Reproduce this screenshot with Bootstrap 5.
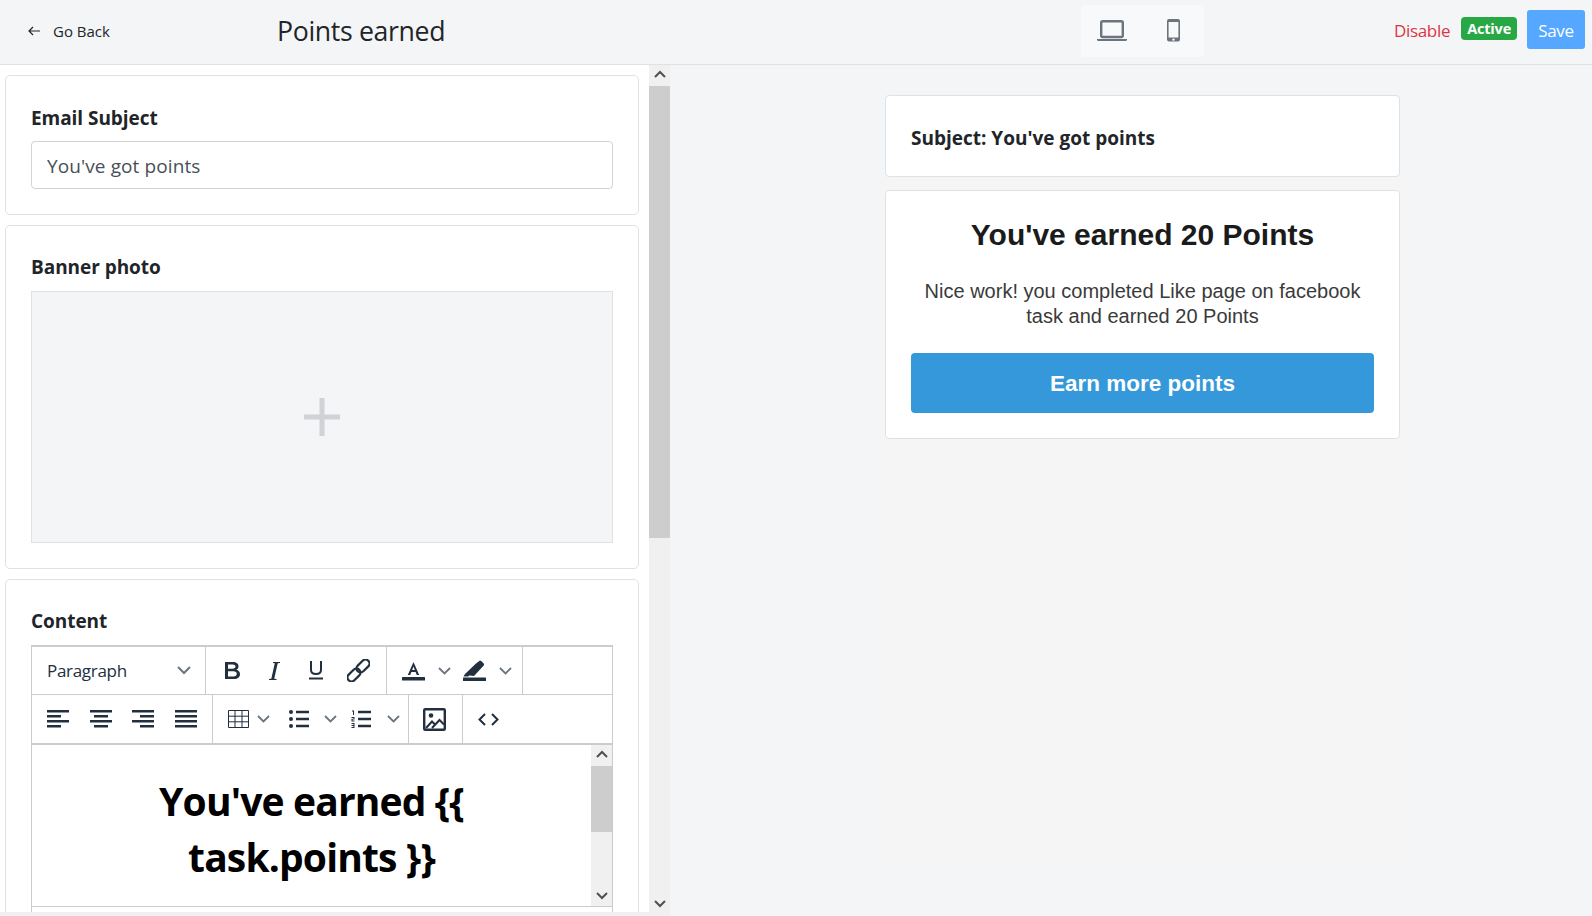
<!DOCTYPE html>
<html lang="en">
<head>
    <meta charset="UTF-8">
    <meta name="viewport" content="width=device-width, initial-scale=1.0">
    <title>Points earned</title>
    <link href="https://cdn.jsdelivr.net/npm/bootstrap@5.3.0/dist/css/bootstrap.min.css" rel="stylesheet">
    <style>
        html, body { height: 100%; overflow: hidden; }
        body { font-family: "Open Sans", "Noto Sans", sans-serif; color: #212529; background: #f4f5f7; }
        .top-bar { height: 65px; border-bottom: 1px solid #dee2e6; background: #f4f5f7; padding-bottom: 2px; }
        .back-link { width: 277px; padding-left: 27px; font-size: 15px; color: #212529; text-decoration: none; gap: 12px; }
        .page-title { font-size: 26.7px; font-weight: 400; margin: 0; letter-spacing: -0.35px; }
        .device-box { width: 123px; height: 52px; background: #f8f9fa; border-radius: 4px; margin: 0 0 1px 636px; gap: 40px; padding-right: 7px; }
        .disable-link { font-size: 17px; color: #dc3545; text-decoration: none; letter-spacing: -0.3px; }
        .status-pill { background: #28a745; color: #fff; font-size: 14.5px; font-weight: 700; padding: 0 6px; height: 23px; line-height: 23px; border-radius: 4px; margin: 0 10px 5px 11px; letter-spacing: -0.2px; }
        .save-btn { width: 58px; height: 39px; padding: 3px 0 0; background: #55a7ff; border: 0; color: #fff; font-size: 17px; border-radius: 3px; margin: 0 7px 4px 0; letter-spacing: -0.3px; }
        .main-area { height: 847px; }
        .left-pane { width: 670px; background: #fff; }
        .left-content { width: 649px; padding: 10px 10px 0 5px; overflow: hidden; }
        .edit-card { border: 1px solid #dee2e6; border-radius: 5px; padding: 27px 25px 25px; margin-bottom: 10px; background: #fff; }
        .edit-card.subject-card { height: 140px; padding-top: 28px; }
        .edit-card.banner-card { height: 344px; }
        .edit-card.content-card { height: 400px; margin-bottom: 0; }
        .field-title { font-size: 19px; font-weight: 700; margin-bottom: 10px; line-height: 28px; letter-spacing: -0.05px; }
        .subject-card .field-title { margin-bottom: 9px; }
        .subject-input { height: 48px; border-color: #ced4da; border-radius: 4px; color: #495057; font-size: 19px; padding: 2px 15px 0; letter-spacing: .1px; }
        .banner-drop { height: 252px; background: #f4f5f7; border: 1px solid #dee2e6; }
        .scroll-rail { width: 21px; flex: none; background: #f0f0f0; }
        .scroll-arrow { height: 21px; color: #505050; }
        .arrow-up { padding-bottom: 4px; }
        .arrow-down { padding-top: 4px; }
        .scroll-thumb { background: #cdcdcd; }
        .rail-thumb-main { height: 452px; }
        .editor-box { border: 1px solid #ccc; border-top-width: 2px; width: 582px; }
        .tool-row { height: 48px; border-bottom: 1px solid #ccc; }
        .tool-row.second-row { height: 50px; border-bottom-width: 2px; }
        .tool-group { height: 100%; border-right: 1px solid #ccc; color: #222f3e; }
        .para-group { width: 174px; padding: 0 14px 0 15px; font-size: 17px; letter-spacing: -0.3px; justify-content: space-between; }
        .format-group { width: 181px; padding-left: 5px; }
        .tool-cell { width: 42px; }
        .color-group { width: 136px; padding-left: 15px; }
        .align-group { width: 181px; padding-left: 15px; gap: 20.5px; }
        .lists-group { width: 196px; padding-left: 15px; }
        .image-group { width: 54px; justify-content: center; padding-right: 2px; }
        .code-group { border-right: 0; padding-left: 15px; }
        .editor-text { height: 161px; }
        .editor-body { min-width: 0; padding: 28px 40px 0; font-size: 39px; font-weight: 700; line-height: 56px; text-align: center; color: #000; letter-spacing: -0.85px; }
        .editor-foot { height: 20px; border-top: 1px solid #ccc; }
        .right-pane { padding-top: 30px; background: #f4f5f7; height: 851px; }
        .mail-shell { width: 540px; margin-left: 202px; }
        .mail-bg { background: #f5f5f5; height: 688px; padding: 13px 12px 0 13px; }
        .mail-subject { height: 82px; margin: 0 12px 0 13px; border: 1px solid #dee2e6; border-radius: 4px; background: #fff; padding: 29px 25px 0; font-size: 19px; font-weight: 700; line-height: 26px; }
        .mail-card { height: 249px; border: 1px solid #dee2e6; border-radius: 4px; background: #fff; padding: 0 25px; font-family: "Liberation Sans", Arial, sans-serif; text-align: center; }
        .mail-heading { font-size: 30px; font-weight: 700; color: #1b1b1b; line-height: 36px; margin: 26px 0 0; }
        .mail-text { font-size: 20px; line-height: 25px; color: #3a3a3a; margin: 26px 0 0; }
        .mail-action { height: 60px; line-height: 62px; margin-top: 24px; background: #3498db; color: #fff; font-size: 22.5px; font-weight: 700; border-radius: 4px; }
        .bottom-strip { height: 4px; background: #f0f0f0; width: 670px; position: relative; }
    </style>
</head>
<body>
    <div class="top-bar d-flex align-items-center">
        <a href="#" class="back-link d-flex align-items-center">
            <svg width="14" height="12" viewBox="0 0 14 12" fill="none" stroke="#212529" stroke-width="1.2"><path d="M13 6H2M6 2 2 6l4 4"/></svg>
            <span>Go Back</span>
        </a>
        <h1 class="page-title">Points earned</h1>
        <div class="device-box d-flex align-items-center justify-content-center">
            <svg width="30" height="22" viewBox="0 0 30 22"><rect x="4.200" y="1.200" width="21.600" height="15.800" rx="1.500" fill="none" stroke="#6c757d" stroke-width="2.400"/><path d="M0 19h30v1a1.500 1.500 0 0 1-1.500 1h-27A1.500 1.500 0 0 1 0 20z" fill="#6c757d"/></svg>
            <svg width="14" height="23" viewBox="0 0 14 23"><rect width="13" height="22.500" rx="2" fill="#6c757d"/><rect x="1.600" y="3" width="9.800" height="15.500" fill="#f8f9fa"/><circle cx="6.500" cy="20.600" r="1.200" fill="#f8f9fa"/></svg>
        </div>
        <div class="ms-auto d-flex align-items-center">
            <a href="#" class="disable-link">Disable</a>
            <span class="status-pill">Active</span>
            <button class="save-btn" type="button">Save</button>
        </div>
    </div>

    <div class="main-area d-flex">
        <div class="left-pane d-flex">
            <div class="left-content">
                <div class="edit-card subject-card">
                    <div class="field-title">Email Subject</div>
                    <input type="text" class="form-control subject-input" value="You've got points">
                </div>
                <div class="edit-card banner-card">
                    <div class="field-title">Banner photo</div>
                    <div class="banner-drop d-flex align-items-center justify-content-center">
                        <svg width="36" height="38" viewBox="0 0 36 38"><path d="M15.500 0h5v16.500H36v5H20.500V38h-5V21.500H0v-5h15.500z" fill="#d0d2d5"/></svg>
                    </div>
                </div>
                <div class="edit-card content-card">
                    <div class="field-title">Content</div>
                    <div class="editor-box">
                        <div class="tool-row d-flex">
                            <div class="tool-group para-group d-flex align-items-center">
                                <span>Paragraph</span>
                                <svg width="14" height="9" viewBox="0 0 14 9" fill="none" stroke="#6b7580" stroke-width="2"><path d="m1 1 6 6 6-6"/></svg>
                            </div>
                            <div class="tool-group format-group d-flex align-items-center">
                                <div class="tool-cell d-flex justify-content-center">
                                    <svg width="15" height="17" viewBox="0 0 15 17" fill="#222f3e" fill-rule="evenodd"><path d="M0 0h8c3.300 0 5.500 1.600 5.500 4.300 0 1.600-.8 2.900-2.200 3.500C13.400 8.400 15 9.900 15 12.200c0 3-2.400 4.800-5.800 4.800H0zm3 2.600v4.100h4.600c1.700 0 2.900-.8 2.900-2.100 0-1.300-1.100-2-2.900-2zm0 6.600v5.200h5.500c2 0 3.300-1 3.300-2.600s-1.300-2.600-3.300-2.600z"/></svg>
                                </div>
                                <div class="tool-cell d-flex justify-content-center">
                                    <svg width="11" height="18" viewBox="0 0 11 18" fill="#222f3e"><path d="M4 0h7v1l-2.300.3L5.200 16.700l2.300.3v1H0v-1l2.300-.3L5.800 1.300 4 1z"/></svg>
                                </div>
                                <div class="tool-cell d-flex justify-content-center">
                                    <svg width="14" height="19" viewBox="0 0 14 19" fill="none" stroke="#222f3e" stroke-width="2"><path d="M2 0v9c0 2.600 1.700 4 5 4s5-1.400 5-4V0"/><path d="M0 17.500h14"/></svg>
                                </div>
                                <div class="tool-cell d-flex justify-content-center">
                                    <svg width="23" height="23" viewBox="0 0 23 23" fill="none" stroke="#222f3e" stroke-width="2.200"><rect x="12" y="-.500" width="8" height="15" rx="4" transform="rotate(45 16 7)"/><rect x="3" y="8.500" width="8" height="15" rx="4" transform="rotate(45 7 16)"/></svg>
                                </div>
                            </div>
                            <div class="tool-group color-group d-flex align-items-center">
                                <svg width="23" height="20" viewBox="0 0 23 20"><path d="M11.500 1 5.800 14h2.400l1.200-3h4.200l1.200 3h2.400zM10.200 9l1.300-3.600L12.800 9z" fill="#222f3e"/><rect y="16" width="23" height="3.500" rx=".5" fill="#222f3e"/></svg>
                                <svg style="margin-left:13px" width="13" height="8" viewBox="0 0 13 8" fill="none" stroke="#6b7580" stroke-width="1.800"><path d="m1 1 5.500 5.500L12 1"/></svg>
                                <svg style="margin-left:12px" width="23" height="21" viewBox="0 0 23 21"><path d="M2 14 13 3.500l3-2.300c.8-.6 1.800-.6 2.500 0l2 2c.7.8.7 1.800 0 2.600L11 16l-4.500-.5L5 16.500H.5z" fill="#222f3e"/><rect y="17.500" width="23" height="3.500" rx=".5" fill="#222f3e"/></svg>
                                <svg style="margin-left:13px" width="13" height="8" viewBox="0 0 13 8" fill="none" stroke="#6b7580" stroke-width="1.800"><path d="m1 1 5.500 5.500L12 1"/></svg>
                            </div>
                        </div>
                        <div class="tool-row second-row d-flex">
                            <div class="tool-group align-group d-flex align-items-center">
                                <svg width="22" height="18" viewBox="0 0 22 18" fill="#222f3e"><path d="M0 0h22v2.500H0zM0 5h14v2.500H0zM0 10h22v2.500H0zM0 15h14v2.500H0z"/></svg>
                                <svg width="22" height="18" viewBox="0 0 22 18" fill="#222f3e"><path d="M0 0h22v2.500H0zM4 5h14v2.500H4zM0 10h22v2.500H0zM4 15h14v2.500H4z"/></svg>
                                <svg width="22" height="18" viewBox="0 0 22 18" fill="#222f3e"><path d="M0 0h22v2.500H0zM8 5h14v2.500H8zM0 10h22v2.500H0zM8 15h14v2.500H8z"/></svg>
                                <svg width="22" height="18" viewBox="0 0 22 18" fill="#222f3e"><path d="M0 0h22v2.500H0zM0 5h22v2.500H0zM0 10h22v2.500H0zM0 15h22v2.500H0z"/></svg>
                            </div>
                            <div class="tool-group lists-group d-flex align-items-center">
                                <svg width="21" height="18" viewBox="0 0 21 18" fill="none" stroke="#222f3e"><path d="M.5.500h20v17H.5zM.5 6.200h20M.5 11.800h20M7 .5v17M14 .5v17"/></svg>
                                <svg class="ms-2" width="13" height="8" viewBox="0 0 13 8" fill="none" stroke="#6b7580" stroke-width="1.800"><path d="m1 1 5.500 5.500L12 1"/></svg>
                                <svg style="margin-left:19px" width="20" height="18" viewBox="0 0 20 18" fill="#222f3e"><circle cx="2" cy="2" r="2"/><circle cx="2" cy="9" r="2"/><circle cx="2" cy="16" r="2"/><path d="M7 .8h13v2.400H7zM7 7.800h13v2.400H7zM7 14.800h13v2.400H7z"/></svg>
                                <svg style="margin-left:15px" width="13" height="8" viewBox="0 0 13 8" fill="none" stroke="#6b7580" stroke-width="1.800"><path d="m1 1 5.500 5.500L12 1"/></svg>
                                <svg style="margin-left:14px" width="20" height="18" viewBox="0 0 20 18" fill="#222f3e"><path d="M7 .8h13v2.400H7zM7 7.800h13v2.400H7zM7 14.800h13v2.400H7zM1 .5h2v4.500H2V1.500H1zM.5 7h3v2.600H1.500v1h2v.9H.5V8.800h2v-.9H.5zM.5 13h3v5h-3v-.9h2v-1.100h-2v-.9h2v-1.200h-2z"/></svg>
                                <svg style="margin-left:16px" width="13" height="8" viewBox="0 0 13 8" fill="none" stroke="#6b7580" stroke-width="1.800"><path d="m1 1 5.500 5.500L12 1"/></svg>
                            </div>
                            <div class="tool-group image-group d-flex align-items-center">
                                <svg width="23" height="23" viewBox="0 0 23 23" fill="none" stroke="#222f3e"><rect x="1.200" y="1.200" width="20.600" height="20.600" rx="1" stroke-width="2.400"/><circle cx="8" cy="7.500" r="2.300" fill="#222f3e" stroke="none"/><path d="m3 20 6-6.500 3.500 3.500M9 20l7.500-8 4.500 4.500" stroke-width="2"/></svg>
                            </div>
                            <div class="tool-group code-group d-flex align-items-center">
                                <svg width="21" height="13" viewBox="0 0 21 13" fill="none" stroke="#222f3e" stroke-width="2"><path d="M7 1 1.500 6.500 7 12M14 1l5.500 5.500L14 12"/></svg>
                            </div>
                        </div>
                        <div class="editor-text d-flex">
                            <div class="editor-body flex-grow-1">You've earned {{ task.points }}</div>
                            <div class="scroll-rail d-flex flex-column">
                                <div class="scroll-arrow arrow-up d-flex align-items-center justify-content-center">
                                    <svg width="12" height="8" viewBox="0 0 12 8" fill="none" stroke="#505050" stroke-width="2"><path d="m1 7 5-5 5 5"/></svg>
                                </div>
                                <div class="scroll-thumb" style="height:66px"></div>
                                <div class="flex-grow-1"></div>
                                <div class="scroll-arrow d-flex align-items-center justify-content-center">
                                    <svg width="12" height="8" viewBox="0 0 12 8" fill="none" stroke="#505050" stroke-width="2"><path d="m1 1 5 5 5-5"/></svg>
                                </div>
                            </div>
                        </div>
                        <div class="editor-foot"></div>
                    </div>
                </div>
            </div>
            <div class="scroll-rail d-flex flex-column">
                <div class="scroll-arrow arrow-up d-flex align-items-center justify-content-center">
                    <svg width="12" height="8" viewBox="0 0 12 8" fill="none" stroke="#505050" stroke-width="2"><path d="m1 7 5-5 5 5"/></svg>
                </div>
                <div class="scroll-thumb rail-thumb-main"></div>
                <div class="flex-grow-1"></div>
                <div class="scroll-arrow arrow-down d-flex align-items-center justify-content-center">
                    <svg width="12" height="8" viewBox="0 0 12 8" fill="none" stroke="#505050" stroke-width="2"><path d="m1 1 5 5 5-5"/></svg>
                </div>
            </div>
        </div>
        <div class="right-pane flex-grow-1">
            <div class="mail-shell">
                <div class="mail-subject">Subject: You've got points</div>
                <div class="mail-bg">
                    <div class="mail-card">
                        <h2 class="mail-heading">You've earned 20 Points</h2>
                        <p class="mail-text">Nice work! you completed Like page on facebook task and earned 20 Points</p>
                        <div class="mail-action">Earn more points</div>
                    </div>
                </div>
            </div>
        </div>
    </div>
    <div class="bottom-strip"></div>
</body>
</html>
